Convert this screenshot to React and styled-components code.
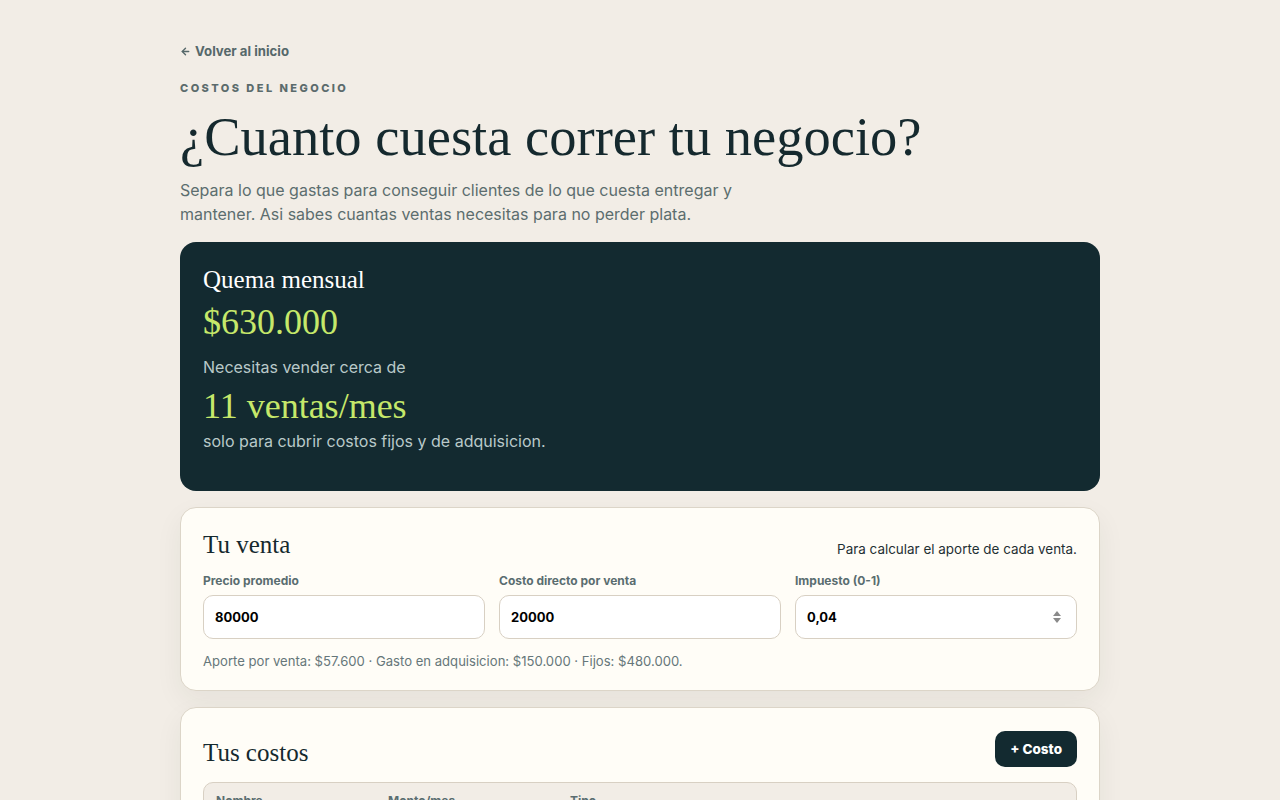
import React, { useState } from "react";
import styled, { createGlobalStyle } from "styled-components";

const GlobalStyle = createGlobalStyle`
  html, body {
    margin: 0;
    padding: 0;
    background: #f2ede6;
  }
  body {
    font-family: Inter, "Noto Sans", sans-serif;
    color: #15292e;
    -webkit-font-smoothing: antialiased;
  }
  * { box-sizing: border-box; }
`;

const serif = `"Liberation Serif", "DejaVu Serif", serif`;

const Page = styled.main`
  width: 920px;
  margin: 0 auto;
  padding: 42px 0 40px;
  display: flex;
  flex-direction: column;
`;

const BackLink = styled.a`
  display: inline-flex;
  align-items: center;
  gap: 4px;
  font-size: 13.2px;
  font-weight: 700;
  color: #56686a;
  text-decoration: none;
  cursor: pointer;
  height: 18px;
`;

const Eyebrow = styled.div`
  margin-top: 21px;
  font-size: 11px;
  font-weight: 800;
  letter-spacing: 2.45px;
  text-transform: uppercase;
  color: #5b6b6c;
  line-height: 14px;
`;

const Title = styled.h1`
  margin: 12px 0 0;
  font-family: ${serif};
  font-weight: 400;
  font-size: 54.5px;
  line-height: 60px;
  letter-spacing: 0;
  color: #15292e;
`;

const Lead = styled.p`
  margin: 11px 0 0;
  max-width: 590px;
  font-size: 16px;
  line-height: 24px;
  color: #5c6d6e;
`;

const Stack = styled.div`
  margin-top: 16px;
  display: flex;
  flex-direction: column;
  gap: 16px;
`;

const HeroCard = styled.section`
  background: #132a30;
  border-radius: 16px;
  padding: 23px 23px 39px;
  display: flex;
  flex-direction: column;
`;

const HeroTitle = styled.h2`
  margin: 0;
  font-family: ${serif};
  font-weight: 400;
  font-size: 25px;
  line-height: 30px;
  color: #ffffff;
`;

const BigFigure = styled.div`
  font-family: ${serif};
  font-size: 36px;
  line-height: 44px;
  color: #c6e86a;
  margin-top: ${(p) => p.$top || 0}px;
`;

const HeroText = styled.div`
  font-size: 16px;
  line-height: 22px;
  color: #b9c9c9;
  margin-top: ${(p) => p.$top || 0}px;
`;

const Card = styled.section`
  background: #fffdf7;
  border: 1px solid #dcd5c8;
  border-radius: 16px;
  padding: ${(p) => p.$pad || "22px"};
  box-shadow: 0 10px 28px rgba(40, 45, 35, 0.06);
`;

const CardHead = styled.div`
  display: flex;
  justify-content: space-between;
  align-items: ${(p) => p.$align || "flex-end"};
`;

const CardTitle = styled.h2`
  margin: ${(p) => p.$top || 0}px 0 0;
  font-family: ${serif};
  font-weight: 400;
  font-size: 25px;
  line-height: 30px;
  color: #15292e;
`;

const Hint = styled.span`
  font-size: 13.45px;
  color: #1f3034;
  line-height: 18px;
  padding-bottom: 2px;
`;

const FieldGrid = styled.div`
  margin-top: 13px;
  display: grid;
  grid-template-columns: repeat(3, 1fr);
  gap: 14px;
`;

const Field = styled.label`
  display: flex;
  flex-direction: column;
  gap: 6px;
`;

const FieldLabel = styled.span`
  font-size: 12px;
  font-weight: 700;
  color: #5a6d70;
  line-height: 16px;
`;

const Input = styled.input`
  height: 44px;
  width: 100%;
  border: 1px solid #d8d0c3;
  border-radius: 10px;
  background: #ffffff;
  padding: 0 11px;
  font-family: Inter, sans-serif;
  font-size: 13px;
  font-weight: 700;
  color: #000;
  outline: none;
`;

const Stepper = styled.div`
  position: relative;
`;

const Arrows = styled.span`
  position: absolute;
  right: 16px;
  top: 50%;
  transform: translateY(-50%);
  display: flex;
  flex-direction: column;
  gap: 2px;
  align-items: center;
`;

const Note = styled.p`
  margin: 13px 0 0;
  font-size: 13.1px;
  line-height: 18px;
  color: #66777a;
`;

const AddButton = styled.button`
  height: 36px;
  padding: 0 15px;
  border: none;
  border-radius: 10px;
  background: #132a30;
  color: #ffffff;
  font-family: Inter, sans-serif;
  font-size: 13.5px;
  font-weight: 800;
  cursor: pointer;
`;

const TableWrap = styled.div`
  margin-top: 14px;
  border: 1px solid #d8d0c3;
  border-radius: 10px;
  background: #f2ede6;
  overflow: hidden;
`;

const TableHead = styled.div`
  display: grid;
  grid-template-columns: 172px 182px 1fr;
  padding: 10px 12px;
  font-size: 12px;
  font-weight: 700;
  color: #5a6d70;
`;

const TableRow = styled.div`
  display: grid;
  grid-template-columns: 172px 182px 1fr;
  padding: 10px 12px;
  font-size: 13px;
  background: #fffdf7;
  border-top: 1px solid #e5ded2;
`;

const costs = [
  { name: "Publicidad", amount: 150000, type: "Adquisicion" },
  { name: "Arriendo", amount: 300000, type: "Fijo" },
  { name: "Software", amount: 180000, type: "Fijo" },
];

export default function App() {
  const [price, setPrice] = useState("80000");
  const [direct, setDirect] = useState("20000");
  const [tax, setTax] = useState("0,04");

  return (
    <>
      <GlobalStyle />
      <Page>
        <BackLink>
          <svg width="11" height="11" viewBox="0 0 24 24" fill="none" stroke="currentColor" strokeWidth="3" strokeLinecap="round" strokeLinejoin="round">
            <path d="M19 12H5" />
            <path d="M12 19l-7-7 7-7" />
          </svg>
          Volver al inicio
        </BackLink>
        <Eyebrow>Costos del negocio</Eyebrow>
        <Title>¿Cuanto cuesta correr tu negocio?</Title>
        <Lead>
          Separa lo que gastas para conseguir clientes de lo que cuesta entregar y
          mantener. Asi sabes cuantas ventas necesitas para no perder plata.
        </Lead>

        <Stack>
          <HeroCard>
            <HeroTitle>Quema mensual</HeroTitle>
            <BigFigure $top={5}>$630.000</BigFigure>
            <HeroText $top={12}>Necesitas vender cerca de</HeroText>
            <BigFigure $top={6}>11 ventas/mes</BigFigure>
            <HeroText $top={2}>solo para cubrir costos fijos y de adquisicion.</HeroText>
          </HeroCard>

          <Card $pad="22px 22px 20px">
            <CardHead>
              <CardTitle>Tu venta</CardTitle>
              <Hint>Para calcular el aporte de cada venta.</Hint>
            </CardHead>
            <FieldGrid>
              <Field>
                <FieldLabel>Precio promedio</FieldLabel>
                <Input value={price} onChange={(e) => setPrice(e.target.value)} />
              </Field>
              <Field>
                <FieldLabel>Costo directo por venta</FieldLabel>
                <Input value={direct} onChange={(e) => setDirect(e.target.value)} />
              </Field>
              <Field>
                <FieldLabel>Impuesto (0-1)</FieldLabel>
                <Stepper>
                  <Input value={tax} onChange={(e) => setTax(e.target.value)} />
                  <Arrows>
                    <svg width="8" height="5" viewBox="0 0 8 5"><path d="M4 0L8 5H0z" fill="#8a8a8a" /></svg>
                    <svg width="8" height="5" viewBox="0 0 8 5"><path d="M0 0h8L4 5z" fill="#8a8a8a" /></svg>
                  </Arrows>
                </Stepper>
              </Field>
            </FieldGrid>
            <Note>Aporte por venta: $57.600 · Gasto en adquisicion: $150.000 · Fijos: $480.000.</Note>
          </Card>

          <Card>
            <CardHead $align="center">
              <CardTitle $top={8}>Tus costos</CardTitle>
              <AddButton>+ Costo</AddButton>
            </CardHead>
            <TableWrap>
              <TableHead>
                <span>Nombre</span>
                <span>Monto/mes</span>
                <span>Tipo</span>
              </TableHead>
              {costs.map((c) => (
                <TableRow key={c.name}>
                  <span>{c.name}</span>
                  <span>${c.amount.toLocaleString("es-CL")}</span>
                  <span>{c.type}</span>
                </TableRow>
              ))}
            </TableWrap>
          </Card>
        </Stack>
      </Page>
    </>
  );
}
